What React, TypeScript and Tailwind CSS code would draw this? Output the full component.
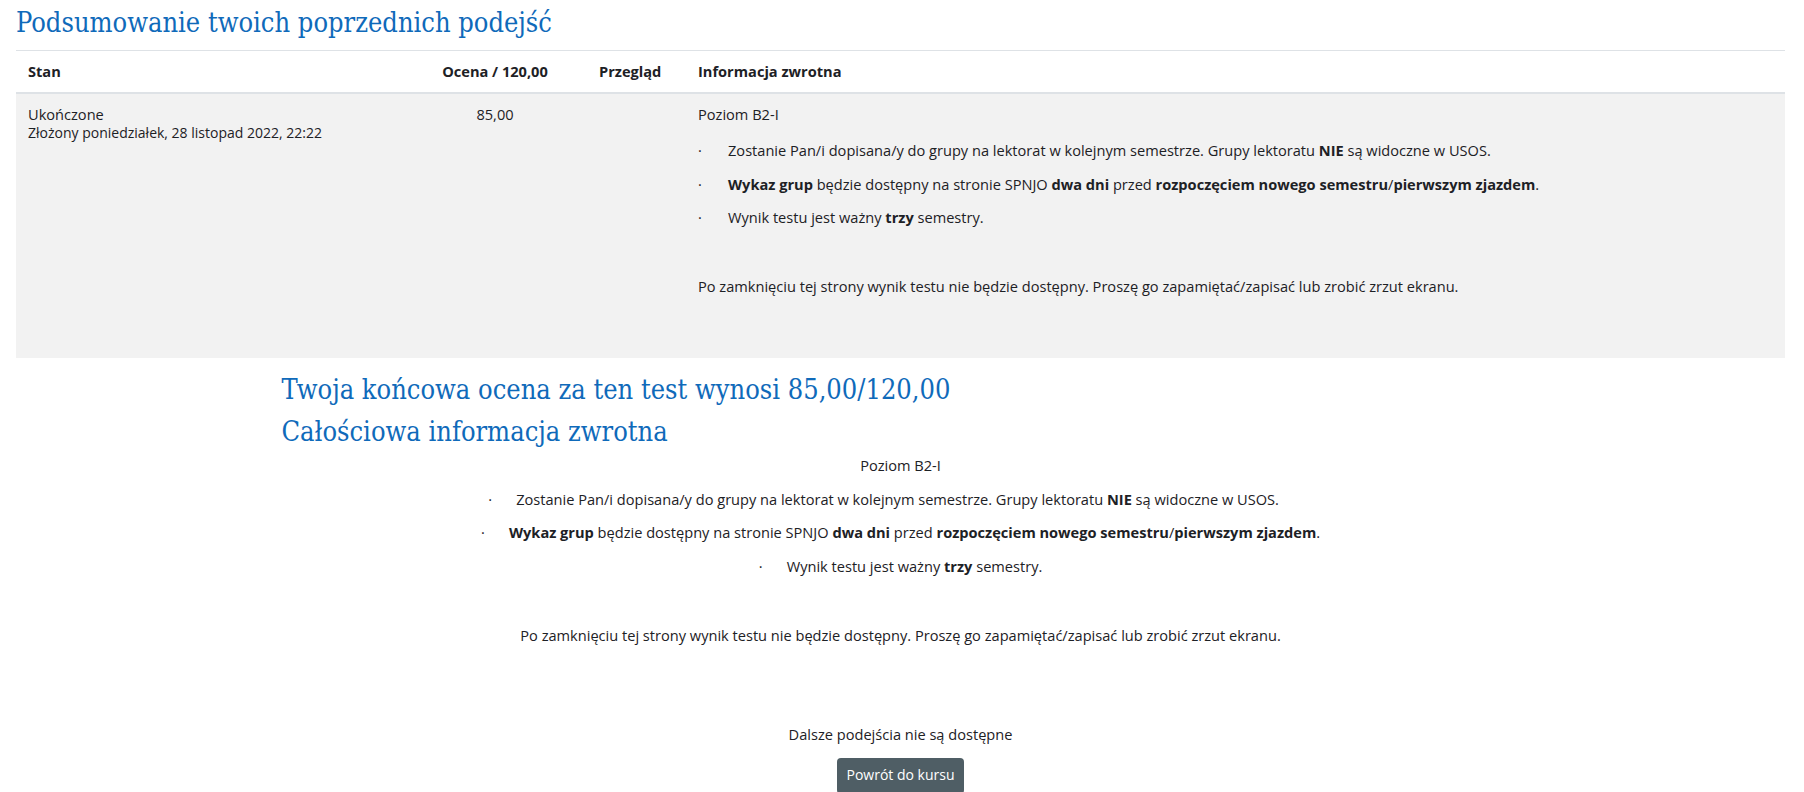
import React from "react";

const feedbackLines = [
  {
    id: 1,
    trail: true,
    content: (
      <>
        Zostanie Pan/i dopisana/y do grupy na lektorat w kolejnym semestrze. Grupy lektoratu{" "}
        <b>NIE</b> są widoczne w USOS.
      </>
    ),
  },
  {
    id: 2,
    trail: false,
    content: (
      <>
        <b>Wykaz grup</b> będzie dostępny na stronie SPNJO <b>dwa dni</b> przed{" "}
        <b>rozpoczęciem nowego semestru</b>/<b>pierwszym zjazdem</b>.
      </>
    ),
  },
  {
    id: 3,
    trail: false,
    content: (
      <>
        Wynik testu jest ważny <b>trzy</b> semestry.
      </>
    ),
  },
];

const closingNote =
  "Po zamknięciu tej strony wynik testu nie będzie dostępny. Proszę go zapamiętać/zapisać lub zrobić zrzut ekranu.";

// FEEDBACK BLOCK (used in table cell and in summary)
const Feedback = ({ centered }: { centered?: boolean }) => (
  <div className={centered ? "text-center" : "text-left"}>
    <p className={centered ? "mb-[11px]" : "mb-[14px]"}>Poziom B2-I</p>
    {feedbackLines.map((line) => (
      <p key={line.id} className="mb-[11px]">
        <span className={`inline-block text-left ${centered ? "w-[28px]" : "w-[30px]"}`}>·</span>
        {line.content}
        {centered && line.trail && <span className="inline-block w-[34px]"></span>}
      </p>
    ))}
    <p className="mb-[13px]">&nbsp;</p>
    <p className="mb-[11px]">{closingNote}</p>
  </div>
);

const App = () => {
  return (
    <div className="min-h-screen bg-white text-[#1d2125] font-[family-name:'Open_Sans',sans-serif] text-[14.6px] leading-[22.5px]">
      <div className="pl-4 pr-[19px]">
        {/* TITLE */}
        <h2 className="font-[family-name:'DejaVu_Serif',serif] font-stretch-condensed text-[#0f6aba] text-[27px] leading-[34px] pt-[6px] pb-[10px]">
          Podsumowanie twoich poprzednich podejść
        </h2>

        {/* ATTEMPTS TABLE */}
        <table className="w-full border-collapse">
          <thead>
            <tr className="border-t border-[#dee2e6]">
              <th className="w-[387px] text-left font-bold px-3 py-[9px] border-b-2 border-[#dee2e6]">Stan</th>
              <th className="w-[184px] text-center font-bold px-3 py-[9px] border-b-2 border-[#dee2e6]">Ocena / 120,00</th>
              <th className="w-[99px] text-left font-bold px-3 py-[9px] border-b-2 border-[#dee2e6]">Przegląd</th>
              <th className="text-left font-bold px-3 py-[9px] border-b-2 border-[#dee2e6]">Informacja zwrotna</th>
            </tr>
          </thead>
          <tbody>
            <tr className="bg-[#f2f2f2] align-top">
              <td className="px-3 pt-[9px] pb-[16px]">
                <div>Ukończone</div>
                <div className="text-[14px] leading-[15px]">Złożony poniedziałek, 28 listopad 2022, 22:22</div>
              </td>
              <td className="px-3 pt-[9px] text-center">85,00</td>
              <td className="px-3 pt-[9px]"></td>
              <td className="px-3 pt-[9px] pb-[16px]">
                <Feedback />
                <p className="mb-[11px]">&nbsp;</p>
              </td>
            </tr>
          </tbody>
        </table>

        {/* SUMMARY */}
        <div className="max-w-[1238px] mx-auto">
          <h3 className="font-[family-name:'DejaVu_Serif',serif] font-stretch-condensed text-[#0f6aba] text-[27px] leading-[34px] mt-[15px]">
            Twoja końcowa ocena za ten test wynosi 85,00/120,00
          </h3>
          <h3 className="font-[family-name:'DejaVu_Serif',serif] font-stretch-condensed text-[#0f6aba] text-[27px] leading-[34px] mt-[8px] mb-[5px]">
            Całościowa informacja zwrotna
          </h3>
          <Feedback centered />

          {/* NO MORE ATTEMPTS */}
          <div className="flex flex-col items-center mt-[77px]">
            <p>Dalsze podejścia nie są dostępne</p>
            <button className="mt-[12px] bg-[#4f5e65] text-white text-[14px] rounded-[4px] px-[9px] h-[36px] whitespace-nowrap">
              Powrót do kursu
            </button>
          </div>
        </div>
      </div>
    </div>
  );
};

export default App;
